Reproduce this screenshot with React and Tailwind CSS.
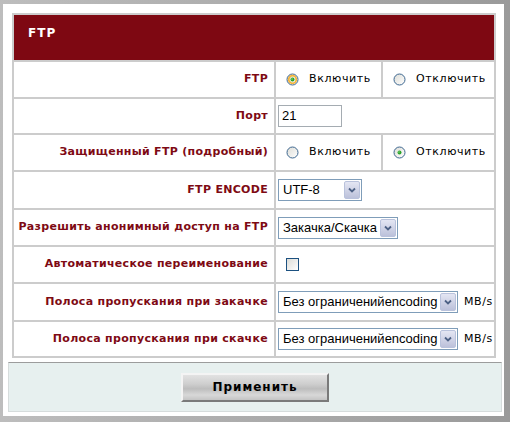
import React from "react";

const label = "font-['DejaVu_Sans',sans-serif] font-bold text-[11px] tracking-[0.3px] text-[#7e0a14]";
const plain = "font-['DejaVu_Sans',sans-serif] text-[11px] tracking-[0.6px] text-black";
const field = "font-['Liberation_Sans',Arial,sans-serif] text-[13px] text-black";

const Radio = ({ checked, focused }) => (
  <svg width="13" height="13" viewBox="0 0 13 13" className="shrink-0">
    <defs>
      <linearGradient id="rg" x1="0" y1="0" x2="1" y2="1">
        <stop offset="0" stopColor="#dcdcd6" />
        <stop offset="1" stopColor="#ffffff" />
      </linearGradient>
    </defs>
    <circle cx="6.5" cy="6.5" r="5.5" fill="url(#rg)" stroke="#3d6790" strokeWidth="1" />
    {focused && <circle cx="6.5" cy="6.5" r="3.8" fill="none" stroke="#f5b53a" strokeWidth="1.8" />}
    {checked && <circle cx="6.5" cy="6.5" r="2" fill="#2aa32a" />}
    {checked && <circle cx="6" cy="6" r="0.8" fill="#7fd97f" />}
  </svg>
);

const RadioCell = ({ text, checked, focused }) => (
  <div className="bg-white flex items-center pl-[10px] gap-[10px]">
    <Radio checked={checked} focused={focused} />
    <span className={plain}>{text}</span>
  </div>
);

const Select = ({ value, width }) => (
  <div
    className={`flex items-stretch h-[22px] border border-[#7f9db9] bg-white ${width}`}
  >
    <span className={`${field} flex-1 flex items-center pl-[4px] whitespace-nowrap overflow-hidden`}>
      {value}
    </span>
    <span className="w-[16px] m-[1px] rounded-[2px] border border-[#b9c2dc] bg-[linear-gradient(to_bottom,#e4e6f3,#bcc1da)] flex items-center justify-center">
      <svg width="8" height="6" viewBox="0 0 8 6">
        <polyline points="1,1.5 4,4.5 7,1.5" fill="none" stroke="#4d6185" strokeWidth="1.8" />
      </svg>
    </span>
  </div>
);

const Label = ({ children }) => (
  <div className={`bg-white flex items-center justify-end pr-[6px] ${label}`}>{children}</div>
);

const Value = ({ children, pad = "pl-[2px]" }) => (
  <div className={`bg-white col-span-2 flex items-center ${pad}`}>{children}</div>
);

export default function App() {
  return (
    <div className="w-[510px] h-[422px] bg-[linear-gradient(to_right,#bdbdbd,#9a9a9a)] pl-[3px] pt-[4px] pr-[6px] pb-[6px]">
      <div className="w-full h-full bg-white pt-[9px]">
        <div className="ml-[9px] w-[484px] grid grid-cols-[260px_105px_111px] grid-rows-[45px_35px_34px_35px_36px_35px_35px_36px_34px] gap-[2px] p-[2px] bg-[#cccccc]">
          <div className="col-span-3 bg-[#7e0812] flex items-center pl-[14px] pb-[10px] font-['DejaVu_Sans',sans-serif] font-bold text-[12px] tracking-[1px] text-white">
            FTP
          </div>

          <Label>FTP</Label>
          <RadioCell text="Включить" checked focused />
          <RadioCell text="Отключить" />

          <Label>Порт</Label>
          <Value>
            <div className={`w-[64px] h-[22px] border border-[#a5acb2] flex items-center pl-[3px] ${field}`}>21</div>
          </Value>

          <Label>Защищенный FTP (подробный)</Label>
          <RadioCell text="Включить" />
          <RadioCell text="Отключить" checked />

          <Label>FTP ENCODE</Label>
          <Value>
            <Select value="UTF-8" width="w-[84px]" />
          </Value>

          <Label>Разрешить анонимный доступ на FTP</Label>
          <Value>
            <Select value="Закачка/Скачка" width="w-[120px]" />
          </Value>

          <Label>Автоматическое переименование</Label>
          <Value pad="pl-[10px]">
            <span className="w-[13px] h-[13px] border border-[#1c5180] bg-[linear-gradient(135deg,#dcdcd7,#ffffff)]" />
          </Value>

          <Label>Полоса пропускания при закачке</Label>
          <Value>
            <Select value="Без ограниченийencoding" width="w-[180px]" />
            <span className={`${plain} ml-[6px]`}>MB/s</span>
          </Value>

          <Label>Полоса пропускания при скачке</Label>
          <Value>
            <Select value="Без ограниченийencoding" width="w-[180px]" />
            <span className={`${plain} ml-[6px]`}>MB/s</span>
          </Value>
        </div>

        <div className="mt-[4px] ml-[5px] w-[494px] h-[50px] bg-[#e7f0ef] border border-[#d6dcdc] border-t-[#9c9c9c] flex items-center justify-center">
          <button className="w-[148px] h-[29px] border-2 border-t-[#f4f4f4] border-l-[#f4f4f4] border-r-[#7a7a7a] border-b-[#7a7a7a] bg-[linear-gradient(to_bottom,#e2e2e2,#cfcfcf_35%,#bdbdbd_55%,#d8d8d8_80%,#c4c4c4)] font-['DejaVu_Sans',sans-serif] font-bold text-[12px] tracking-[1px] text-black">
            Применить
          </button>
        </div>
      </div>
    </div>
  );
}
